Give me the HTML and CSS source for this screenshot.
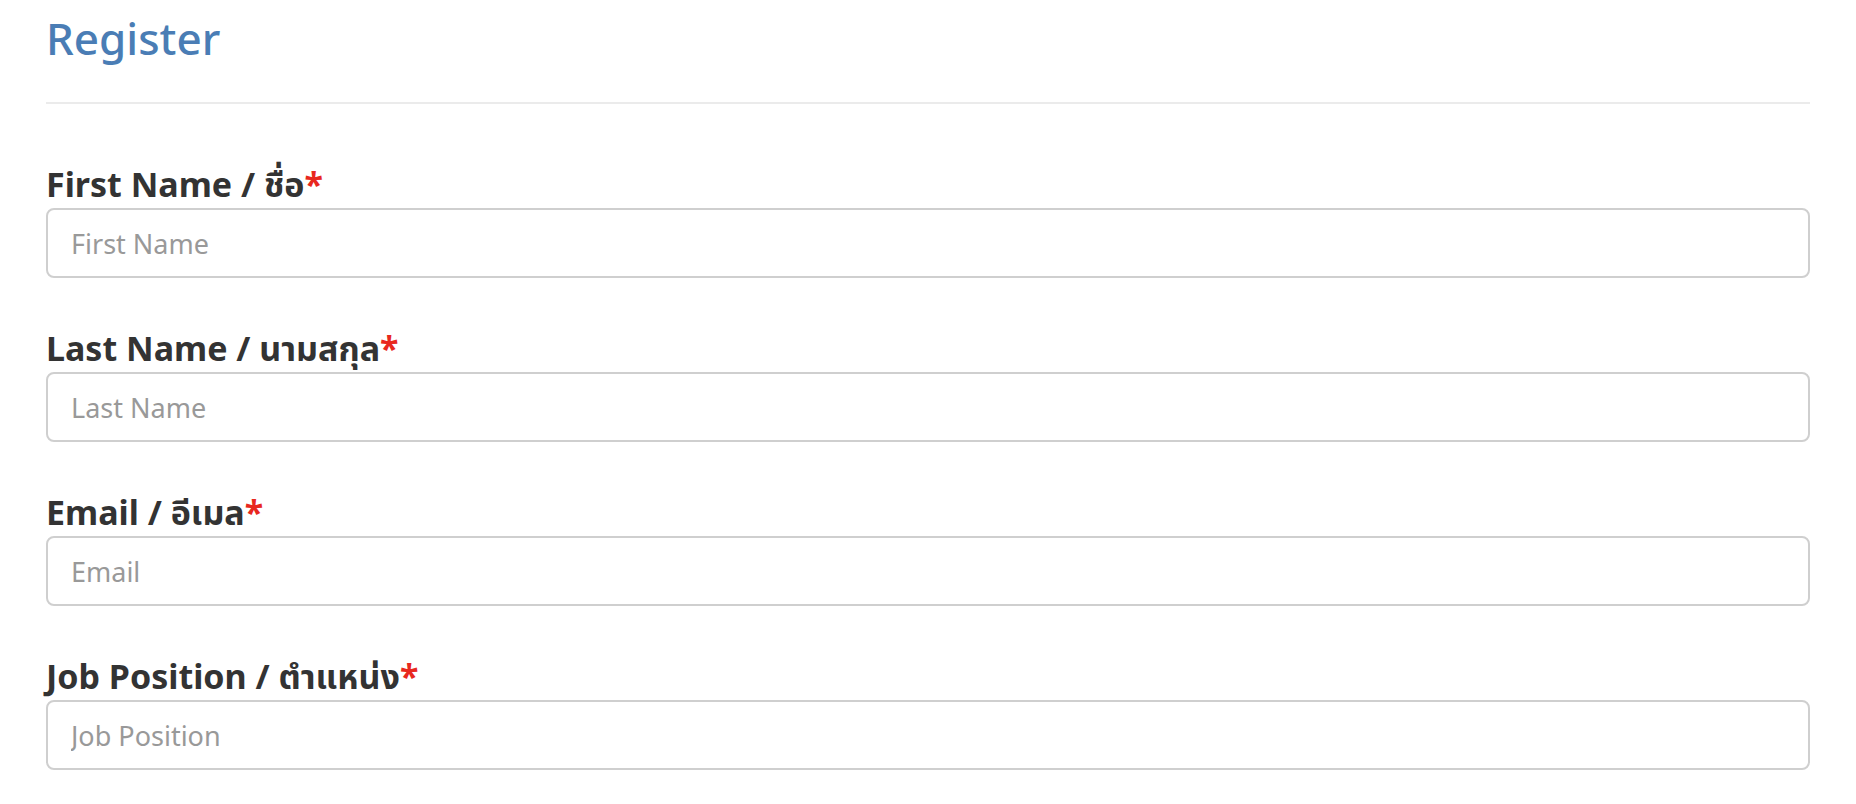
FILE: index.html
```html
<!DOCTYPE html>
<html lang="en">
<head>
<meta charset="utf-8">
<title>Register</title>
<link rel="stylesheet" href="styles.css">
</head>
<body>
<div class="page">
  <h1 class="title">Register</h1>
  <hr class="divider">
  <form class="form">
    <div class="field">
      <label class="label" for="fn">First Name / ชื่อ<span class="req">*</span></label>
      <input class="input" id="fn" type="text" placeholder="First Name">
    </div>
    <div class="field">
      <label class="label" for="ln">Last Name / นามสกุล<span class="req">*</span></label>
      <input class="input" id="ln" type="text" placeholder="Last Name">
    </div>
    <div class="field">
      <label class="label" for="em">Email / อีเมล<span class="req">*</span></label>
      <input class="input" id="em" type="text" placeholder="Email">
    </div>
    <div class="field">
      <label class="label" for="jp">Job Position / ตำแหน่ง<span class="req">*</span></label>
      <input class="input" id="jp" type="text" placeholder="Job Position">
    </div>
  </form>
</div>
</body>
</html>
```
FILE: styles.css
```css
html, body {
  margin: 0;
  padding: 0;
  background: #fff;
}
body {
  font-family: "Noto Sans", "Noto Sans Thai", "DejaVu Sans", sans-serif;
  color: #333;
}
.page {
  padding: 0 46px;
}
.title {
  margin: 0;
  padding-top: 8px;
  font-size: 44px;
  font-weight: 500;
  line-height: 60px;
  color: #4a7db5;
}
.divider {
  margin: 34px 0 0;
  border: 0;
  border-top: 2px solid #ebebeb;
}
.form {
  padding-top: 60px;
}
.field {
  display: flex;
  flex-direction: column;
  margin-bottom: 50px;
}
.label {
  font-size: 34px;
  font-weight: 700;
  line-height: 40px;
  margin-bottom: 4px;
  color: #333;
}
.req {
  color: #e8281e;
}
.input {
  box-sizing: border-box;
  height: 70px;
  width: 100%;
  border: 2px solid #cfcfcf;
  border-radius: 8px;
  padding: 0 23px;
  font-family: inherit;
  font-size: 27px;
  color: #333;
  background: #fff;
  outline: none;
}
.input::placeholder {
  color: #999;
}
```
